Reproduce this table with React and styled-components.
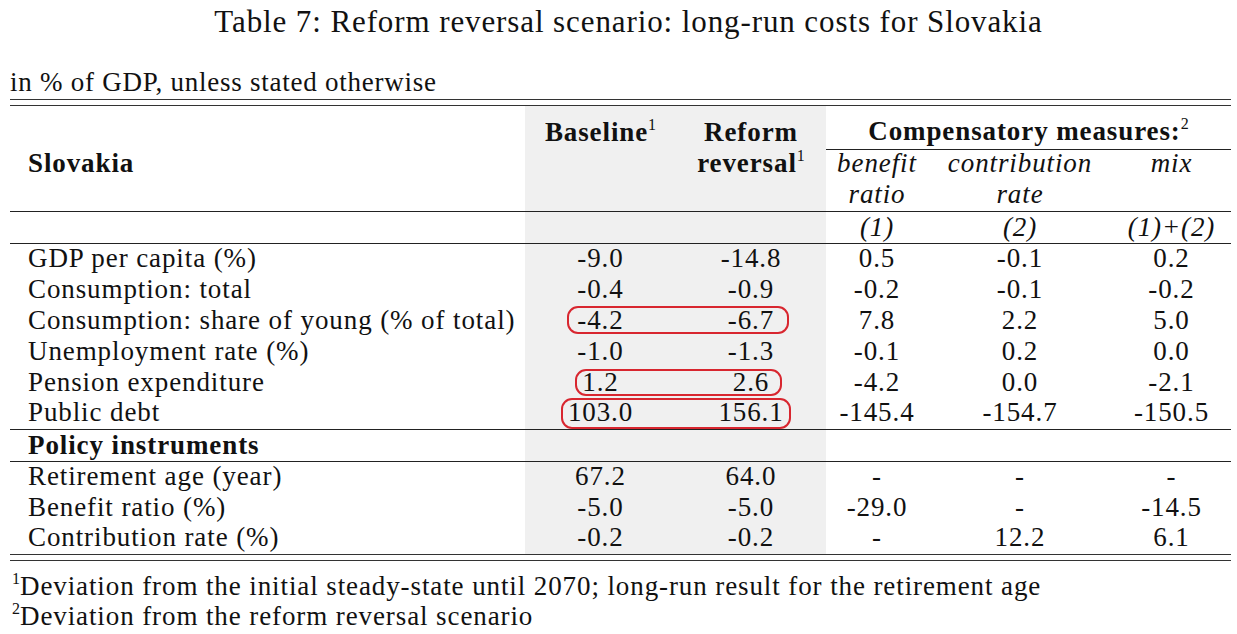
import React from 'react'
import styled, { createGlobalStyle } from 'styled-components'

const serif = '"Liberation Serif", "Times New Roman", serif'

const GlobalStyle = createGlobalStyle`
  body {
    margin: 0;
    background: #fff;
    color: #111;
    font-family: ${serif};
  }
`

const Page = styled.div`
  width: 1237px;
  height: 634px;
  padding: 0 6px 0 10px;
  box-sizing: border-box;
  overflow: hidden;
  font-family: ${serif};
  color: #111;
`
const Title = styled.h1`
  margin: 0;
  padding: 4px 0 0 16px;
  font-family: ${serif};
  font-weight: 400;
  font-size: 31px;
  line-height: 36px;
  letter-spacing: 0.9px;
  text-align: center;
`
const Caption = styled.div`
  margin-top: 28px;
  font-size: 27px;
  line-height: 28px;
  letter-spacing: 0.75px;
  padding-bottom: 3px;
  border-bottom: 1.5px solid #333;
`
const Rule = styled.div`
  height: 5px;
  border-bottom: 1.5px solid #333;
`
const Table = styled.table`
  width: 1221px;
  margin-top: 5px;
  border-collapse: collapse;
  table-layout: fixed;
  border-top: 1.5px solid #333;
  border-bottom: 1.5px solid #333;
  font-family: ${serif};
  font-size: 27px;
  letter-spacing: 0.9px;
  color: #111;
`
const Row = styled.tr`
  height: ${(p) => p.$h || 31}px;
  border-bottom: ${(p) => (p.$rule ? '1px solid #222' : 'none')};
`
const Cell = styled.td`
  position: relative;
  padding: 0 0 ${(p) => p.$pb || 0}px ${(p) => (p.$label ? '18px' : '0')};
  text-align: ${(p) => (p.$label ? 'left' : 'center')};
  vertical-align: ${(p) => p.$valign || 'middle'};
  line-height: 26px;
  background: ${(p) => (p.$shade ? '#f0f0f0' : 'transparent')};
  font-weight: ${(p) => (p.$bold ? 700 : 400)};
  font-style: ${(p) => (p.$italic ? 'italic' : 'normal')};
  white-space: nowrap;
`
const GroupHead = styled.td`
  text-align: center;
  vertical-align: bottom;
  padding-bottom: 5px;
  font-weight: 700;
  line-height: 26px;
  border-bottom: 1px solid #222;
  white-space: nowrap;
`
const Sup = styled.sup`
  font-size: 16px;
  letter-spacing: 0;
  font-weight: 400;
  font-style: normal;
  position: relative;
  top: -1px;
  vertical-align: super;
  line-height: 0;
`
const Mark = styled.span`
  position: absolute;
  left: ${(p) => p.$left}px;
  top: ${(p) => p.$top}px;
  width: ${(p) => p.$width}px;
  height: ${(p) => p.$height}px;
  box-sizing: border-box;
  border: 2px solid #d8262f;
  border-radius: 11px;
  pointer-events: none;
  z-index: 2;
`
const Notes = styled.div`
  margin-top: 10px;
  padding-left: 2px;
  font-size: 27px;
  line-height: 30px;
  letter-spacing: 0.9px;
`

const rows = [
  ['GDP per capita (%)', '-9.0', '-14.8', '0.5', '-0.1', '0.2'],
  ['Consumption: total', '-0.4', '-0.9', '-0.2', '-0.1', '-0.2'],
  ['Consumption: share of young (% of total)', '-4.2', '-6.7', '7.8', '2.2', '5.0', { left: 42, top: 0, width: 222, height: 28 }],
  ['Unemployment rate (%)', '-1.0', '-1.3', '-0.1', '0.2', '0.0'],
  ['Pension expenditure', '1.2', '2.6', '-4.2', '0.0', '-2.1', { left: 50, top: 1, width: 207, height: 27 }],
  ['Public debt', '103.0', '156.1', '-145.4', '-154.7', '-150.5', { left: 36, top: -1, width: 230, height: 31 }],
]

const policy = [
  ['Retirement age (year)', '67.2', '64.0', '-', '-', '-'],
  ['Benefit ratio (%)', '-5.0', '-5.0', '-29.0', '-', '-14.5'],
  ['Contribution rate (%)', '-0.2', '-0.2', '-', '12.2', '6.1'],
]

const DataRow = ({ r, rule }) => (
  <Row $rule={rule}>
    <Cell $label $pb={3}>{r[0]}</Cell>
    <Cell $shade $pb={3}>
      {r[1]}
      {r[6] && <Mark $left={r[6].left} $top={r[6].top} $width={r[6].width} $height={r[6].height} />}
    </Cell>
    <Cell $shade $pb={3}>{r[2]}</Cell>
    <Cell $pb={3}>{r[3]}</Cell>
    <Cell $pb={3}>{r[4]}</Cell>
    <Cell $pb={3}>{r[5]}</Cell>
  </Row>
)

export default function App() {
  return (
    <Page>
      <GlobalStyle />
      <Title>Table 7: Reform reversal scenario: long-run costs for Slovakia</Title>
      <Caption>in % of GDP, unless stated otherwise</Caption>
      <Table>
        <colgroup>
          <col style={{ width: 515 }} />
          <col style={{ width: 151 }} />
          <col style={{ width: 150 }} />
          <col style={{ width: 102 }} />
          <col style={{ width: 184 }} />
          <col style={{ width: 119 }} />
        </colgroup>
        <thead>
          <Row $h={44}>
            <Cell />
            <Cell $shade $bold $valign="bottom" $pb={5}>
              Baseline<Sup>1</Sup>
            </Cell>
            <Cell $shade $bold $valign="bottom" $pb={5}>Reform</Cell>
            <GroupHead colSpan={3}>
              Compensatory measures:<Sup>2</Sup>
            </GroupHead>
          </Row>
          <Row $h={30}>
            <Cell $label $bold $pb={3}>Slovakia</Cell>
            <Cell $shade />
            <Cell $shade $bold $pb={3}>
              reversal<Sup>1</Sup>
            </Cell>
            <Cell $italic $pb={3}>benefit</Cell>
            <Cell $italic $pb={3}>contribution</Cell>
            <Cell $italic $pb={3}>mix</Cell>
          </Row>
          <Row $h={32} $rule>
            <Cell />
            <Cell $shade />
            <Cell $shade />
            <Cell $italic $pb={3}>ratio</Cell>
            <Cell $italic $pb={3}>rate</Cell>
            <Cell />
          </Row>
          <Row $h={32} $rule>
            <Cell />
            <Cell $shade />
            <Cell $shade />
            <Cell $italic $pb={2}>(1)</Cell>
            <Cell $italic $pb={2}>(2)</Cell>
            <Cell $italic $pb={2}>(1)+(2)</Cell>
          </Row>
        </thead>
        <tbody>
          {rows.map((r, i) => (
            <DataRow key={r[0]} r={r} rule={i === rows.length - 1} />
          ))}
          <Row $h={32} $rule>
            <Cell $label $bold $pb={2}>Policy instruments</Cell>
            <Cell $shade />
            <Cell $shade />
            <Cell />
            <Cell />
            <Cell />
          </Row>
          {policy.map((r) => (
            <DataRow key={r[0]} r={r} />
          ))}
        </tbody>
      </Table>
      <Rule />
      <Notes>
        <div>
          <Sup>1</Sup>Deviation from the initial steady-state until 2070; long-run result for the retirement age
        </div>
        <div>
          <Sup>2</Sup>Deviation from the reform reversal scenario
        </div>
      </Notes>
    </Page>
  )
}
